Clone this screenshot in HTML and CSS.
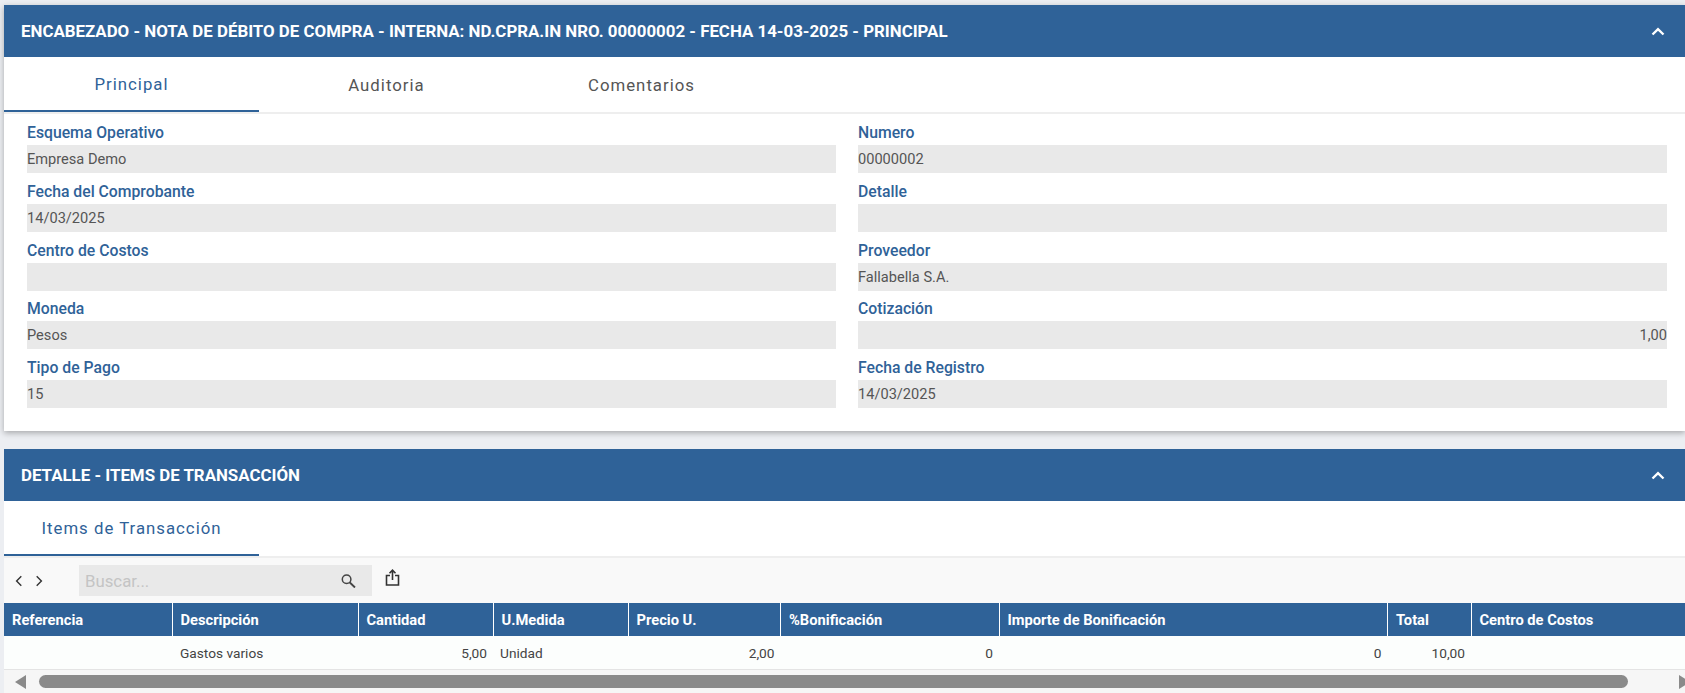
FILE: index.html
```html
<!DOCTYPE html>
<html lang="es">
<head>
<meta charset="utf-8">
<title>Nota de débito de compra</title>
<link rel="stylesheet" href="styles.css">
</head>
<body>
<section class="panel panel-top">
  <header class="panel-head">
    <h2>ENCABEZADO - NOTA DE DÉBITO DE COMPRA - INTERNA: ND.CPRA.IN NRO. 00000002 - FECHA 14-03-2025 - PRINCIPAL</h2>
    <svg class="chev" width="14" height="9" viewBox="0 0 14 9"><path d="M1.5 7.5 7 2.2l5.5 5.3" fill="none" stroke="#fff" stroke-width="2.4"/></svg>
  </header>
  <nav class="tabs">
    <span class="tab active">Principal</span>
    <span class="tab">Auditoria</span>
    <span class="tab">Comentarios</span>
  </nav>
  <div class="form">
    <div class="field"><label>Esquema Operativo</label><div class="value">Empresa Demo</div></div>
    <div class="field"><label>Numero</label><div class="value">00000002</div></div>
    <div class="field"><label>Fecha del Comprobante</label><div class="value">14/03/2025</div></div>
    <div class="field"><label>Detalle</label><div class="value"></div></div>
    <div class="field"><label>Centro de Costos</label><div class="value"></div></div>
    <div class="field"><label>Proveedor</label><div class="value">Fallabella S.A.</div></div>
    <div class="field"><label>Moneda</label><div class="value">Pesos</div></div>
    <div class="field"><label>Cotización</label><div class="value right">1,00</div></div>
    <div class="field"><label>Tipo de Pago</label><div class="value">15</div></div>
    <div class="field"><label>Fecha de Registro</label><div class="value">14/03/2025</div></div>
  </div>
</section>
<section class="panel panel-bottom">
  <header class="panel-head">
    <h2>DETALLE - ITEMS DE TRANSACCIÓN</h2>
    <svg class="chev" width="14" height="9" viewBox="0 0 14 9"><path d="M1.5 7.5 7 2.2l5.5 5.3" fill="none" stroke="#fff" stroke-width="2.4"/></svg>
  </header>
  <nav class="tabs">
    <span class="tab active">Items de Transacción</span>
  </nav>
  <div class="toolbar">
    <svg class="nav-icon" width="10" height="14" viewBox="0 0 10 14"><path d="M7.3 2.3 2.6 7l4.7 4.7" fill="none" stroke="#333" stroke-width="1.4"/></svg>
    <svg class="nav-icon next" width="10" height="14" viewBox="0 0 10 14"><path d="M2.7 2.3 7.4 7l-4.7 4.7" fill="none" stroke="#333" stroke-width="1.4"/></svg>
    <div class="search">
      <span class="placeholder">Buscar...</span>
      <svg class="search-icon" width="15" height="14" viewBox="0 0 15 14"><circle cx="5.6" cy="5.3" r="4.3" fill="none" stroke="#444" stroke-width="1.5"/><path d="m8.8 8.5 5.2 5" stroke="#444" stroke-width="1.9"/></svg>
    </div>
    <svg class="share" width="18" height="18" viewBox="0 0 18 18"><path d="M6 6.5H2.5v9.5h12V6.5H11M8.5 11V1.5M5.5 4.2l3-3 3 3" fill="none" stroke="#333" stroke-width="1.6"/></svg>
  </div>
  <table class="grid">
    <colgroup>
      <col class="c1"><col class="c2"><col class="c3"><col class="c4"><col class="c5"><col class="c6"><col class="c7"><col class="c8"><col class="c9">
    </colgroup>
    <thead>
      <tr><th>Referencia</th><th>Descripción</th><th>Cantidad</th><th>U.Medida</th><th>Precio U.</th><th>%Bonificación</th><th>Importe de Bonificación</th><th>Total</th><th>Centro de Costos</th></tr>
    </thead>
    <tbody>
      <tr><td></td><td>Gastos varios</td><td class="num">5,00</td><td class="unit">Unidad</td><td class="num">2,00</td><td class="num">0</td><td class="num">0</td><td class="num">10,00</td><td></td></tr>
    </tbody>
  </table>
  <div class="scrollbar">
    <svg class="arrow" width="12" height="14" viewBox="0 0 12 14"><path d="M11 0v14L0 7z" fill="#8a8a8a"/></svg>
    <div class="thumb"></div>
    <svg class="arrow" width="12" height="14" viewBox="0 0 12 14"><path d="M0 0v14l11-7z" fill="#8a8a8a"/></svg>
  </div>
</section>
</body>
</html>
```
FILE: styles.css
```css
* { box-sizing: border-box; }
html, body { height: 100%; }
body {
  margin: 0;
  padding: 5px 0 0 4px;
  background: #eceef2;
  font-family: Roboto, "Liberation Sans", sans-serif;
  overflow: hidden;
}
.panel { background: #fff; }
.panel-top {
  height: 426px;
  margin-bottom: 18px;
  box-shadow: 0 2px 6px rgba(0, 0, 0, .3);
}
.panel-head {
  height: 52px;
  background: #2f6298;
  display: flex;
  align-items: center;
  justify-content: space-between;
  padding: 0 20px 0 17px;
}
.panel-head h2 {
  margin: 0;
  color: #fff;
  font-size: 16.88px;
  font-weight: 700;
}
.chev { display: block; }
.tabs {
  height: 57px;
  display: flex;
  border-bottom: 2px solid #eee;
}
.tab {
  width: 255px;
  height: 55px;
  padding-top: 1px;
  display: flex;
  align-items: center;
  justify-content: center;
  font-size: 16.8px;
  letter-spacing: 1px;
  color: #555;
}
.tab.active {
  color: #2f6298;
  border-bottom: 2px solid #2f6298;
}
.form {
  display: grid;
  grid-template-columns: 809px 809px;
  column-gap: 22px;
  padding: 0 0 0 23px;
}
.field { height: 58.75px; display: flex; flex-direction: column; }
.field label {
  flex: none;
  height: 31px;
  padding-top: 10px;
  color: #2f6298;
  font-size: 15.75px;
  font-weight: 500;
  line-height: 18px;
}
.value {
  flex: none;
  height: 28px;
  background: #e9e9e9;
  color: #555;
  font-size: 14.6px;
  line-height: 29px;
}
.value.right { text-align: right; }
.toolbar {
  height: 45px;
  background: #f9f9f9;
  display: flex;
  align-items: center;
  padding-left: 10px;
}
.nav-icon { display: block; }
.nav-icon.next { margin-left: 10px; }
.search {
  width: 293px;
  height: 31px;
  margin-left: 35px;
  padding: 0 16px 0 6px;
  background: #e9e9e9;
  display: flex;
  align-items: center;
  justify-content: space-between;
}
.placeholder { color: #c4c4c4; font-size: 16.8px; }
.search-icon { margin-top: 1px; }
.share { margin: -6px 0 0 12px; }
.grid {
  width: 1681px;
  table-layout: fixed;
  border-collapse: collapse;
  font-size: 13.7px;
}
.c1 { width: 168px; }
.c2 { width: 186px; }
.c3 { width: 135px; }
.c4 { width: 135px; }
.c5 { width: 152.5px; }
.c6 { width: 218.5px; }
.c7 { width: 388.5px; }
.c8 { width: 83.5px; }
.c9 { width: 214px; }
.grid th {
  height: 33px;
  padding: 0 8px;
  background: #2f6298;
  border-left: 1px solid #fff;
  color: #fff;
  font-size: 14.7px;
  font-weight: 700;
  text-align: left;
}
.grid th:first-child { border-left: 0; }
.grid td {
  height: 33px;
  padding: 2px 6px 0 8px;
  background: #fcfefd;
  border-bottom: 1px solid #e4e4e4;
  color: #444;
}
.grid td.num { text-align: right; }
.grid td.unit { padding-left: 7px; }
.scrollbar {
  height: 24px;
  background: #f6f6f6;
  display: flex;
  align-items: center;
  padding: 0 0 0 11px;
}
.thumb {
  width: 1589px;
  height: 13px;
  margin: 0 51px 0 12px;
  border-radius: 7px;
  background: #8a8a8a;
  flex: none;
}
.arrow { flex: none; }
```
